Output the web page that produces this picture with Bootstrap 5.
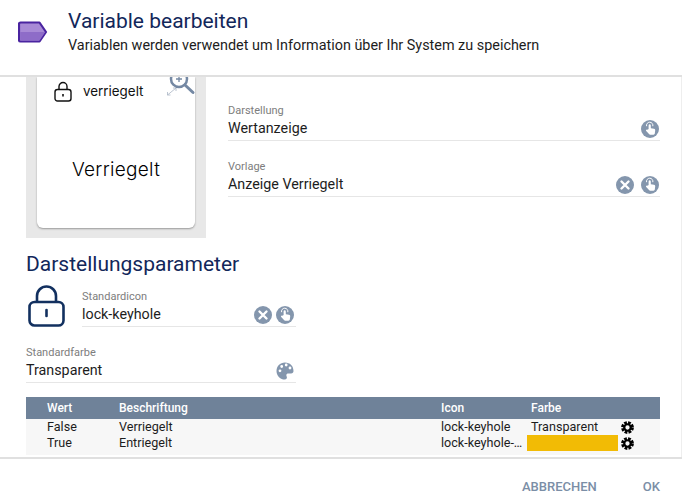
<!DOCTYPE html>
<html lang="de">
<head>
  <meta charset="UTF-8" />
  <meta name="viewport" content="width=device-width, initial-scale=1.0"/>
  <title>Variable bearbeiten</title>
  <link href="https://cdn.jsdelivr.net/npm/bootstrap@5.3.0/dist/css/bootstrap.min.css" rel="stylesheet"/>

  <style>
    html, body {
      height: 500px;
      overflow: hidden;
    }

    body {
      font-family: Roboto, "Liberation Sans", sans-serif;
      color: #1d1d1d;
      background: #fff;
    }

    .dialog-head {
      height: 77px;
      padding: 9px 0 0 18px;
      border-bottom: 2px solid #e0e0e0;
      flex: none;
    }

    .dialog-head svg { margin-top: 12px; }

    .dialog-titles { margin-left: 20px; }

    .dialog-title {
      font-size: 21px;
      line-height: 24px;
      font-weight: 400;
      color: #12275a;
      margin: 0 0 1px;
    }

    .dialog-sub {
      font-size: 14.4px;
      line-height: 24px;
      margin: 0;
    }

    .dialog-body {
      height: 380px;
      flex: none;
      padding: 0 21px 0 26px;
      overflow: hidden;
      border-right: 1px solid #eee;
    }

    .preview {
      width: 180px;
      height: 161px;
      background: #e8e8e8;
      padding: 0 11px 10px;
      overflow: hidden;
      position: relative;
      flex: none;
    }

    .preview-card {
      height: 151px;
      background: #fff;
      border-radius: 0 0 6px 6px;
      box-shadow: 0 1px 2px rgba(0, 0, 0, .35);
      font-family: Inter, "Open Sans", sans-serif;
      color: #111;
    }

    .preview-top {
      padding: 2px 0 0 17px;
      gap: 11px;
      font-size: 13.4px;
      height: 27px;
    }

    .preview-big {
      font-size: 19px;
      font-weight: 300;
      letter-spacing: .3px;
      color: #000;
      text-align: center;
      margin-top: 52px;
    }

    .zoom-icon {
      position: absolute;
      left: 140px;
      top: -7px;
    }

    .fields { width: 432px; margin-left: 22px; padding-top: 27px; }

    .field { margin-bottom: 19px; }

    .field-label {
      font-size: 11px;
      line-height: 13px;
      color: #7d7d7d;
    }

    .field-value {
      height: 24px;
      line-height: 23px;
      font-size: 14.3px;
      border-bottom: 1px solid #e6e6e6;
      gap: 7px;
      padding-right: 1px;
    }

    .field-value span { flex-grow: 1; }

    .w-icon { width: 214px; }
    .w-color { width: 270px; }

    .w-icon .field-value, .w-color .field-value {
      gap: 4px;
      padding-right: 2px;
    }

    .section-title {
      font-size: 21px;
      line-height: 24px;
      font-weight: 400;
      color: #12275a;
      margin: 14px 0 14px;
    }

    .big-lock { margin: -5px 17px 0 2px; flex: none; }

    .values {
      width: 634px;
      background: #f7f7f7;
      margin-top: -5px;
      height: 58px;
    }

    .values .table {
      table-layout: fixed;
      margin: 0;
      font-size: 12.6px;
      --bs-table-bg: transparent;
      color: #1d1d1d;
    }

    .values th, .values td {
      padding: 0;
      border: 0;
      line-height: 16px;
      height: 16px;
      color: #1d1d1d;
      vertical-align: middle;
    }

    .values thead th {
      height: 22px;
      background: #6f8299;
      color: #fff;
      font-size: 12px;
      font-weight: 500;
    }

    .values .first { padding-left: 21px; }

    .swatch {
      height: 16px;
      width: 91px;
      margin: -1px 0 0 -4px;
      background: #f2bb05;
    }

    .cog { margin-left: 1px; }

    .dialog-foot {
      height: 43px;
      flex: none;
      border-top: 2px solid #e0e0e0;
      padding: 0 22px 0 0;
      gap: 46px;
    }

    .dialog-foot .btn {
      padding: 0;
      border: 0;
      font-size: 13px;
      font-weight: 500;
      color: #7b8ea6;
      margin-top: 15px;
    }
  </style>
</head>

<body>
  <svg width="0" height="0" class="position-absolute">
    <defs>
      <symbol id="touch" viewBox="0 0 18 18">
        <circle cx="9" cy="9" r="9" fill="#8496ad"/>
        <path d="M7.600 8.900V5.400a1.100 1.100 0 0 1 2.200 0v2.800l3.200.6c.8.2 1.300.8 1.200 1.600l-.4 3.200c-.1.7-.6 1.100-1.300 1.100H9.200c-.5 0-.9-.2-1.200-.6L5.200 11c-.7-.9.5-2 1.400-1.200z" fill="#fff"/>
        <path d="M5.600 6.200a3.200 3.200 0 1 1 6.200 0" fill="none" stroke="#fff" stroke-width="1"/>
      </symbol>
      <symbol id="clear" viewBox="0 0 18 18">
        <circle cx="9" cy="9" r="9" fill="#8496ad"/>
        <path d="M5.500 5.500l7 7M12.500 5.500l-7 7" stroke="#fff" stroke-width="2.400" stroke-linecap="round"/>
      </symbol>
      <symbol id="cog" viewBox="0 0 14 14">
        <circle cx="7" cy="7" r="5.200" fill="none" stroke="#000" stroke-width="3.400" stroke-dasharray="2.800 1.280"/>
        <circle cx="7" cy="7" r="3.500" fill="none" stroke="#000" stroke-width="2.400"/>
      </symbol>
    </defs>
  </svg>

  <div class="d-flex flex-column">
    <header class="dialog-head d-flex">
      <svg width="30" height="22" viewBox="0 0 30 22" class="flex-shrink-0">
        <path d="M2.500 1.500h19l6.500 9.500-6.500 9.500h-19a1.500 1.500 0 0 1-1.500-1.500V3a1.500 1.500 0 0 1 1.500-1.500z" fill="#a88ad6" stroke="#4a24a0" stroke-width="2.200" stroke-linejoin="round"/>
        <path d="M2.200 11h25l-5.800 8.800H2.200z" fill="#8e6cc8"/>
      </svg>
      <div class="dialog-titles">
        <h1 class="dialog-title">Variable bearbeiten</h1>
        <p class="dialog-sub">Variablen werden verwendet um Information über Ihr System zu speichern</p>
      </div>
    </header>

    <main class="dialog-body">
      <div class="d-flex">
        <div class="preview">
          <div class="preview-card">
            <div class="preview-top d-flex align-items-center">
              <svg width="18" height="21" viewBox="0 0 18 21" fill="none" stroke="#111" stroke-width="1.400">
                <path d="M5 9V5.500a4 4 0 0 1 8 0V9"/>
                <rect x="1" y="8.500" width="16" height="11.500" rx="2.500"/>
                <path d="M9 13v2.500" stroke-width="1.600"/>
              </svg>
              <span>verriegelt</span>
            </div>
            <div class="preview-big">Verriegelt</div>
          </div>
          <svg class="zoom-icon" width="32" height="36" viewBox="0 0 32 36" fill="none" stroke="#7488a3">
            <circle cx="13" cy="9" r="8" stroke-width="2.500"/>
            <path d="M19 15l8 7.500" stroke-width="3" stroke-linecap="round"/>
            <path d="M13 6v6M10 9h6" stroke-width="1.300"/>
            <path d="M1.500 25l8.500-7M1.500 22v3h3M10 21v-3H7" stroke="#aab5c4" stroke-width=".8"/>
          </svg>
        </div>

        <div class="fields">
          <div class="field">
            <div class="field-label">Darstellung</div>
            <div class="field-value d-flex align-items-center">
              <span>Wertanzeige</span>
              <svg width="18" height="18"><use href="#touch"/></svg>
            </div>
          </div>
          <div class="field">
            <div class="field-label">Vorlage</div>
            <div class="field-value d-flex align-items-center">
              <span>Anzeige Verriegelt</span>
              <svg width="18" height="18"><use href="#clear"/></svg>
              <svg width="18" height="18"><use href="#touch"/></svg>
            </div>
          </div>
        </div>
      </div>

      <h2 class="section-title">Darstellungsparameter</h2>

      <div class="d-flex align-items-start">
        <svg class="big-lock" width="37" height="42" viewBox="0 0 37 42" fill="none" stroke="#12305f" stroke-width="2.600">
          <path d="M9 17V11a9.500 9.500 0 0 1 19 0v6"/>
          <rect x="1.500" y="17" width="34" height="23.500" rx="5"/>
          <path d="M18.500 25v6" stroke-linecap="round"/>
        </svg>
        <div class="field w-icon">
          <div class="field-label">Standardicon</div>
          <div class="field-value d-flex align-items-center">
            <span>lock-keyhole</span>
            <svg width="18" height="18"><use href="#clear"/></svg>
            <svg width="18" height="18"><use href="#touch"/></svg>
          </div>
        </div>
      </div>

      <div class="field w-color">
        <div class="field-label">Standardfarbe</div>
        <div class="field-value d-flex align-items-center">
          <span>Transparent</span>
          <svg width="18" height="18" viewBox="0 0 18 18">
            <path fill-rule="evenodd" fill="#8496ad" d="M9 .5C4 .5 .4 4.400 .5 9.200c.1 4.800 4 8.300 8.300 8.300 1.500 0 2.300-1 2.100-2.200-.2-1.100-.7-1.700-.5-2.600.2-.8 1-1.200 2-1.200h2.700c1.500 0 2.400-1 2.400-2.500C17.500 4 14 .5 9 .5zM4 10.200a1.400 1.400 0 1 1 0-2.800 1.400 1.400 0 0 1 0 2.800zm1.700-4.300a1.400 1.400 0 1 1 0-2.800 1.400 1.400 0 0 1 0 2.800zm4.500-1.500a1.400 1.400 0 1 1 0-2.800 1.400 1.400 0 0 1 0 2.800zm3.800 3a1.400 1.400 0 1 1 0-2.800 1.400 1.400 0 0 1 0 2.800z"/>
          </svg>
        </div>
      </div>

      <div class="values">
        <table class="table">
          <colgroup>
            <col style="width:93px"/><col style="width:322px"/><col style="width:90px"/><col style="width:89px"/><col/>
          </colgroup>
          <thead>
            <tr>
              <th class="first">Wert</th>
              <th>Beschriftung</th>
              <th>Icon</th>
              <th>Farbe</th>
              <th></th>
            </tr>
          </thead>
          <tbody>
            <tr>
              <td class="first">False</td>
              <td>Verriegelt</td>
              <td class="text-truncate pe-1">lock-keyhole</td>
              <td>Transparent</td>
              <td><svg width="13" height="13" class="d-block cog"><use href="#cog"/></svg></td>
            </tr>
            <tr>
              <td class="first">True</td>
              <td>Entriegelt</td>
              <td class="text-truncate pe-1">lock-keyhole-open</td>
              <td><div class="swatch"></div></td>
              <td><svg width="13" height="13" class="d-block cog"><use href="#cog"/></svg></td>
            </tr>
          </tbody>
        </table>
      </div>
    </main>

    <footer class="dialog-foot d-flex justify-content-end">
      <button type="button" class="btn">ABBRECHEN</button>
      <button type="button" class="btn">OK</button>
    </footer>
  </div>

  <script src="https://cdn.jsdelivr.net/npm/bootstrap@5.3.0/dist/js/bootstrap.bundle.min.js"></script>
</body>
</html>
